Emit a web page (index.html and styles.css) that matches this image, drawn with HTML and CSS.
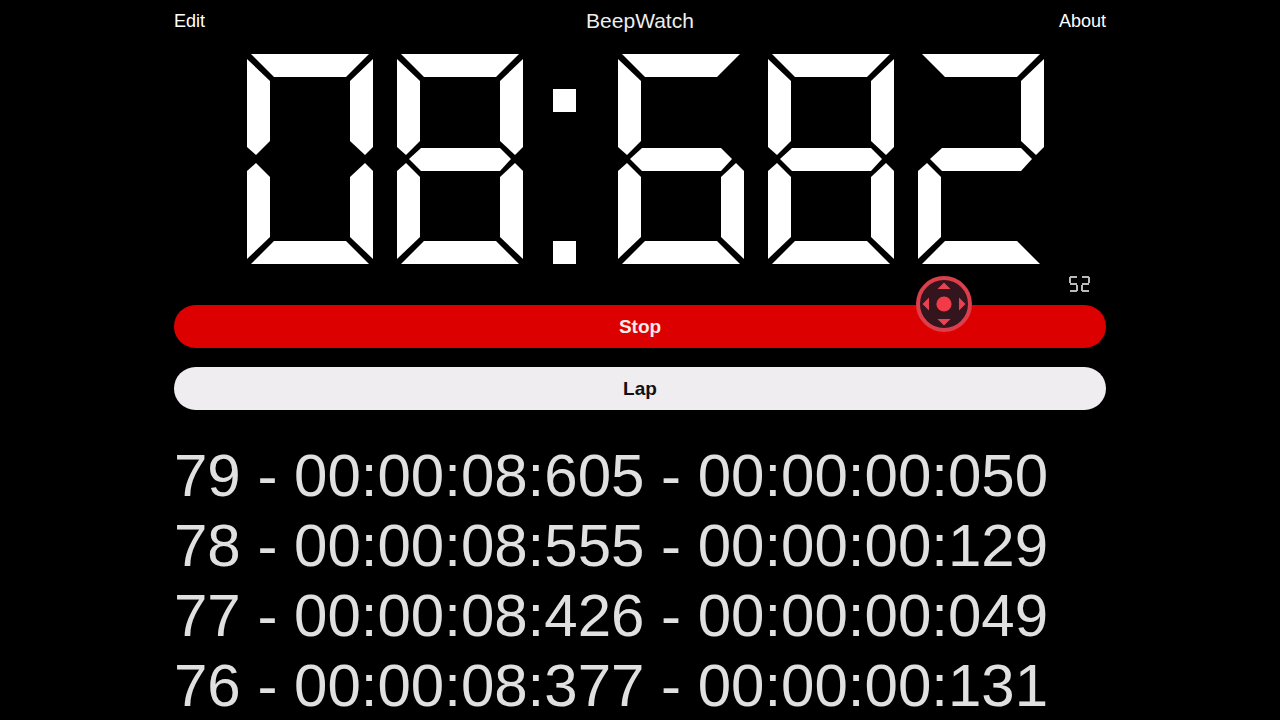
FILE: index.html
```html
<!DOCTYPE html>
<html lang="en">
<head>
  <meta charset="UTF-8">
  <meta name="viewport" content="width=device-width, initial-scale=1">
  <title>BeepWatch</title>
  <link rel="stylesheet" href="styles.css">
</head>
<body>
  <main class="app">
    <header class="topbar">
      <button class="nav-btn" type="button">Edit</button>
      <h1 class="title">BeepWatch</h1>
      <button class="nav-btn nav-right" type="button">About</button>
    </header>

    <div class="display" id="display" role="img" aria-label="08:682"></div>

    <div class="counter-row">
      <div class="counter" id="counter" role="img" aria-label="52"></div>
    </div>

    <div class="controls">
      <button class="btn stop" type="button">Stop</button>
      <button class="btn lap" type="button">Lap</button>
      <svg class="pointer" viewBox="0 0 56 56" aria-hidden="true">
        <circle cx="28" cy="28" r="26" fill="#35151d" stroke="#dc3e4c" stroke-width="4"/>
        <circle cx="28" cy="28" r="7.6" fill="#f23a48"/>
        <path d="M28 6.5l6.5 6.5h-13zM28 49.500l6.500-6.500h-13zM6.500 28l6.500-6.500v13zM49.500 28l-6.500-6.500v13z" fill="#e84352"/>
      </svg>
    </div>

    <ol class="laps">
      <li>79 - 00:00:08:605 - 00:00:00:050</li>
      <li>78 - 00:00:08:555 - 00:00:00:129</li>
      <li>77 - 00:00:08:426 - 00:00:00:049</li>
      <li>76 - 00:00:08:377 - 00:00:00:131</li>
    </ol>
  </main>

  <script src="script.js"></script>
</body>
</html>
```
FILE: styles.css
```css
* { box-sizing: border-box; }
body { margin: 0; background: #000; color: #fff; font-family: "Liberation Sans", Arial, sans-serif; }
button { font-family: inherit; border: 0; cursor: pointer; }

.app { max-width: 960px; margin: 0 auto; padding: 0 14px; }

.topbar { display: grid; grid-template-columns: 1fr auto 1fr; align-items: center; height: 42px; margin-bottom: 12px; }
.title { margin: 0; font-size: 21px; font-weight: normal; color: #eee; }
.nav-btn { justify-self: start; padding: 0; background: none; color: #fff; font-size: 18px; }
.nav-right { justify-self: end; }

/* seven segment digits */
.display { display: flex; justify-content: center; gap: 24px; padding-left: 11px; }
.digit { display: grid; width: 126px; height: 210px; }
.seg { grid-area: 1 / 1; background: #fff; }
.seg-a { clip-path: polygon(4px 0, 122px 0, 99px 23px, 27px 23px); }
.seg-b { clip-path: polygon(126px 5px, 103px 27px, 103px 87px, 118px 101px, 126px 93px); }
.seg-c { clip-path: polygon(126px 205px, 103px 183px, 103px 123px, 118px 109px, 126px 117px); }
.seg-d { clip-path: polygon(4px 210px, 122px 210px, 99px 187px, 27px 187px); }
.seg-e { clip-path: polygon(0 205px, 23px 183px, 23px 123px, 9px 109px, 0 117px); }
.seg-f { clip-path: polygon(0 5px, 23px 27px, 23px 87px, 9px 101px, 0 93px); }
.seg-g { clip-path: polygon(12px 105px, 24px 94px, 103px 94px, 114px 105px, 103px 117px, 24px 117px); }
.colon { display: flex; flex-direction: column; justify-content: space-between; width: 23px; height: 210px; margin: 0 18px 0 6px; padding-top: 35px; }
.dot { height: 23px; background: #fff; }

.counter-row { display: flex; justify-content: flex-end; height: 41px; padding: 12px 16px 0 0; }
.counter { display: flex; gap: 3px; }
.counter .digit { width: 9px; height: 16px; }
.counter .seg { clip-path: none; background: #bbb; }
.counter .seg-a, .counter .seg-d, .counter .seg-g { height: 2px; margin: 0 1px; }
.counter .seg-b, .counter .seg-c, .counter .seg-e, .counter .seg-f { width: 2px; height: 6px; margin: 1px 0; }
.counter .seg-b, .counter .seg-c { justify-self: end; }
.counter .seg-c, .counter .seg-d, .counter .seg-e { align-self: end; }
.counter .seg-g { align-self: center; }

.controls { position: relative; display: grid; gap: 19px; }
.btn { height: 43px; border-radius: 22px; font-size: 19px; font-weight: bold; }
.stop { background: #dc0000; color: #f6eaea; }
.lap { background: #efedf0; color: #111; }
.pointer { position: absolute; top: -29px; right: 134px; width: 56px; height: 56px; }

.laps { list-style: none; margin: 31px 0 0; padding: 0; color: #e0e0e0; font-size: 60px; line-height: 70px; }
```
FILE: script.js
```javascript
// segments lit for each number
const segments = {
  0: "abcdef",
  1: "bc",
  2: "abged",
  3: "abgcd",
  4: "fgbc",
  5: "afgcd",
  6: "afgecd",
  7: "abc",
  8: "abcdefg",
  9: "abcdfg"
};

function showValue(id, value) {
  const el = document.getElementById(id);
  el.innerHTML = "";
  for (const ch of value) {
    const cell = document.createElement("span");
    if (ch === ":") {
      cell.className = "colon";
      cell.innerHTML = '<span class="dot"></span><span class="dot"></span>';
    } else {
      cell.className = "digit";
      for (const s of segments[ch]) {
        const seg = document.createElement("span");
        seg.className = "seg seg-" + s;
        cell.appendChild(seg);
      }
    }
    el.appendChild(cell);
  }
  el.setAttribute("aria-label", value);
}

showValue("display", "08:682");
showValue("counter", "52");
```
